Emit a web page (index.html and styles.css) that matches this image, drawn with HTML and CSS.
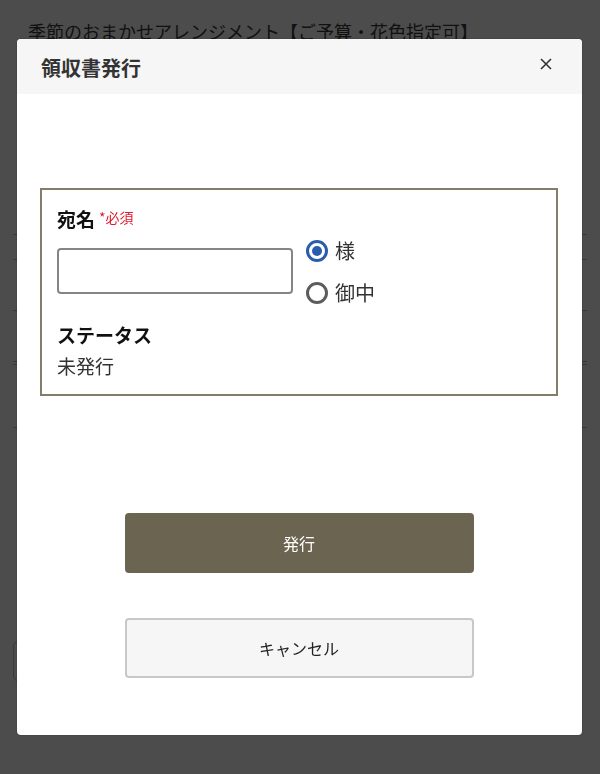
FILE: index.html
```html
<!DOCTYPE html>
<html lang="ja">
<head>
<meta charset="utf-8">
<title>領収書発行</title>
<link rel="stylesheet" href="styles.css">
</head>
<body>
<div class="page">
  <h1 class="page-title">季節のおまかせアレンジメント【ご予算・花色指定可】</h1>
  <div class="rows">
    <div class="row r1"></div>
    <div class="row r2"></div>
    <div class="row r3"></div>
    <div class="row r4"></div>
    <div class="row r5"></div>
    <div class="row r6"></div>
  </div>
  <div class="page-btn"></div>
</div>

<div class="overlay">
  <div class="modal">
    <div class="modal-header">
      <h2 class="modal-title">領収書発行</h2>
      <button class="close" aria-label="閉じる">
        <svg width="12" height="12" viewBox="0 0 12 12"><path d="M1 1L11 11M11 1L1 11" stroke="#333" stroke-width="1.6" fill="none"/></svg>
      </button>
    </div>
    <div class="modal-body">
      <div class="fieldset">
        <div class="label">宛名<span class="req">*必須</span></div>
        <div class="name-row">
          <div class="input"></div>
          <div class="radios">
            <div class="radio-item"><span class="radio checked"></span><span class="radio-label">様</span></div>
            <div class="radio-item"><span class="radio"></span><span class="radio-label">御中</span></div>
          </div>
        </div>
        <div class="label status-label">ステータス</div>
        <div class="status-value">未発行</div>
      </div>
      <div class="actions">
        <button class="btn primary">発行</button>
        <button class="btn secondary">キャンセル</button>
      </div>
    </div>
  </div>
</div>
</body>
</html>
```
FILE: styles.css
```css
html, body {
  margin: 0;
  padding: 0;
}
body {
  background: #ffffff;
  font-family: "Noto Sans CJK JP", "Noto Sans", sans-serif;
  color: #333;
  width: 600px;
  height: 774px;
  overflow: hidden;
}
.page {
  padding-top: 20px;
}
.page-title {
  margin: 0 0 0 28px;
  font-size: 18px;
  line-height: 22px;
  font-weight: 400;
  color: #3a3a3a;
  white-space: nowrap;
}
.rows {
  margin: 0 13px;
}
.row {
  border-bottom: 1px solid #bdbdbd;
}
.r1 { height: 192px; }
.r2 { height: 24px; }
.r3 { height: 50px; }
.r4 { height: 50px; }
.r5 { height: 2px; }
.r6 { height: 62px; }
.page-btn {
  margin: 213px 0 0 13px;
  width: 120px;
  height: 38px;
  border: 1px solid #bdbdbd;
  border-radius: 5px;
}

.overlay {
  position: fixed;
  inset: 0;
  background: rgba(0, 0, 0, 0.7);
  padding: 39px 0 0 17px;
}
.modal {
  width: 565px;
  height: 696px;
  background: #fff;
  border-radius: 4px;
  box-shadow: 0 0 2px rgba(0, 0, 0, 0.35);
}
.modal-header {
  height: 55px;
  background: #f6f6f6;
  border-radius: 4px 4px 0 0;
  display: flex;
  align-items: center;
  justify-content: space-between;
  padding: 0 30px 0 24px;
}
.modal-title {
  margin: 0;
  font-size: 20px;
  font-weight: 700;
  color: #333;
  line-height: 26px;
  padding-top: 2px;
}
.close {
  border: 0;
  background: none;
  padding: 0;
  width: 12px;
  height: 12px;
  margin-top: -6px;
  display: flex;
}
.modal-body {
  padding: 94px 24px 0 23px;
}
.fieldset {
  border: 2px solid #847d69;
  padding: 17px 15px 16px;
}
.label {
  font-size: 19px;
  font-weight: 700;
  line-height: 24px;
  color: #111;
  display: flex;
  align-items: flex-start;
}
.req {
  font-size: 14px;
  font-weight: 400;
  color: #e0192b;
  line-height: 18px;
  margin-left: 4px;
  margin-top: 1px;
}
.name-row {
  display: flex;
  align-items: flex-start;
  margin-top: 7px;
}
.input {
  width: 232px;
  height: 42px;
  border: 2px solid #858585;
  border-radius: 4px;
  margin-top: 10px;
}
.radios {
  display: flex;
  flex-direction: column;
  gap: 16px;
  margin-left: 13px;
}
.radio-item {
  display: flex;
  align-items: center;
  height: 26px;
}
.radio {
  width: 22px;
  height: 22px;
  box-sizing: border-box;
  border: 3px solid #5c5c5c;
  border-radius: 50%;
  display: flex;
  align-items: center;
  justify-content: center;
}
.radio.checked {
  border-color: #2a5cae;
}
.radio.checked::after {
  content: "";
  width: 10px;
  height: 10px;
  border-radius: 50%;
  background: #2a5cae;
}
.radio-label {
  margin-left: 7px;
  font-size: 20px;
  line-height: 26px;
  color: #333;
}
.status-label {
  margin-top: 17px;
}
.status-value {
  margin-top: 7px;
  font-size: 19px;
  line-height: 24px;
  color: #333;
}
.actions {
  display: flex;
  flex-direction: column;
  align-items: center;
  gap: 45px;
  margin-top: 117px;
}
.btn {
  width: 349px;
  height: 60px;
  border-radius: 4px;
  font-family: "Noto Sans CJK JP", "Noto Sans", sans-serif;
  font-size: 16px;
  cursor: pointer;
}
.primary {
  background: #6b6450;
  color: #fff;
  border: 0;
}
.secondary {
  background: #f6f6f6;
  color: #222;
  border: 2px solid #c8c8c8;
}
```
